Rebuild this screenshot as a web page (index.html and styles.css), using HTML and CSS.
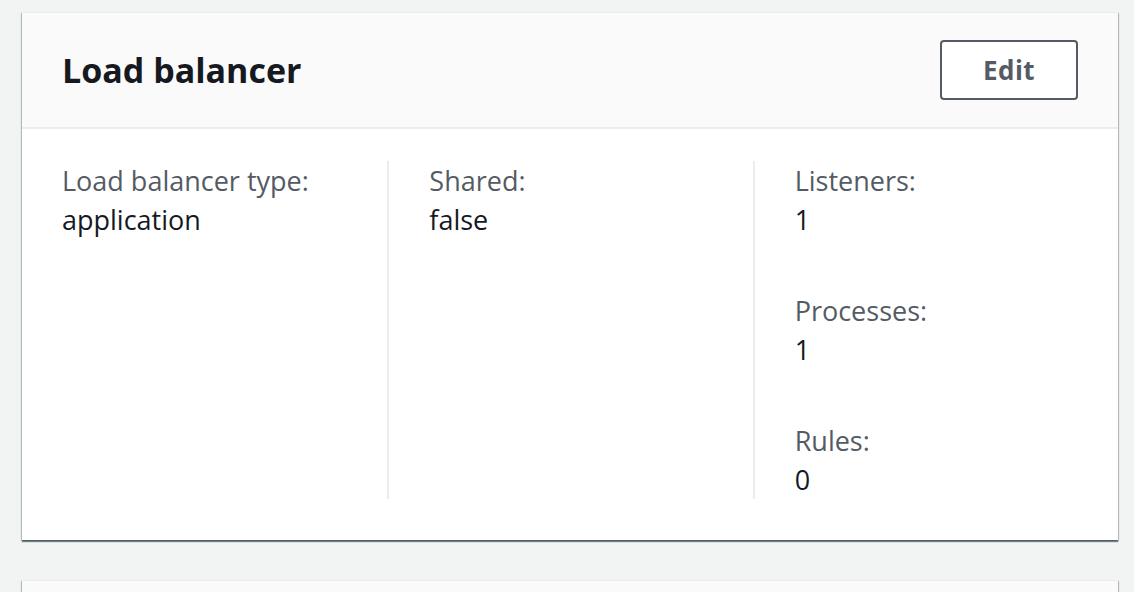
FILE: index.html
```html
<!DOCTYPE html>
<html lang="en">
<head>
<meta charset="utf-8">
<title>Load balancer</title>
<link rel="stylesheet" href="styles.css">
</head>
<body>
<main class="page">
  <section class="card">
    <header class="card-header">
      <h2 class="card-title">Load balancer</h2>
      <button class="btn" type="button">Edit</button>
    </header>
    <div class="card-body">
      <div class="col">
        <div class="kv">
          <div class="kv-label">Load balancer type:</div>
          <div class="kv-value">application</div>
        </div>
      </div>
      <div class="col">
        <div class="kv">
          <div class="kv-label">Shared:</div>
          <div class="kv-value">false</div>
        </div>
      </div>
      <div class="col">
        <div class="kv">
          <div class="kv-label">Listeners:</div>
          <div class="kv-value">1</div>
        </div>
        <div class="kv">
          <div class="kv-label">Processes:</div>
          <div class="kv-value">1</div>
        </div>
        <div class="kv">
          <div class="kv-label">Rules:</div>
          <div class="kv-value">0</div>
        </div>
      </div>
    </div>
  </section>
  <section class="card card-next">
    <header class="card-header"></header>
  </section>
</main>
</body>
</html>
```

FILE: styles.css
```css
html, body {
  margin: 0;
  padding: 0;
  background: #f2f3f3;
}
body {
  font-family: "Open Sans", "Noto Sans", "Liberation Sans", sans-serif;
  color: #16191f;
}
.page {
  padding: 12px 16px 0 22px;
  display: flex;
  flex-direction: column;
  gap: 40px;
}
.card {
  background: #ffffff;
  border-top: 1px solid #eaeded;
  box-shadow: 0 2px 1px 0 rgba(0, 28, 36, 0.5), 1px 1px 1px 0 rgba(0, 28, 36, 0.2), -1px 1px 1px 0 rgba(0, 28, 36, 0.2);
}
.card-header {
  background: #fafafa;
  border-bottom: 2px solid #eaeded;
  height: 116px;
  box-sizing: border-box;
  padding: 0 40px;
  display: flex;
  align-items: center;
  justify-content: space-between;
}
.card-title {
  margin: 0;
  font-size: 34px;
  font-weight: 700;
  line-height: 40px;
  color: #16191f;
}
.btn {
  font-family: inherit;
  width: 138px;
  height: 60px;
  background: #ffffff;
  border: 2px solid #545b64;
  border-radius: 4px;
  color: #545b64;
  font-size: 26px;
  font-weight: 700;
  padding: 0;
  letter-spacing: 0.5px;
}
.card-body {
  display: grid;
  grid-template-columns: 1fr 1fr 1fr;
  padding: 32px 0 41px;
}
.col {
  padding: 0 40px;
  display: flex;
  flex-direction: column;
  gap: 52px;
}
.col + .col {
  border-left: 2px solid #eaeded;
}
.kv-label {
  font-size: 27px;
  line-height: 39px;
  color: #545b64;
}
.kv-value {
  font-size: 27px;
  line-height: 39px;
  color: #16191f;
}
.card-next .card-header {
  height: 60px;
  border-bottom: none;
}
```
